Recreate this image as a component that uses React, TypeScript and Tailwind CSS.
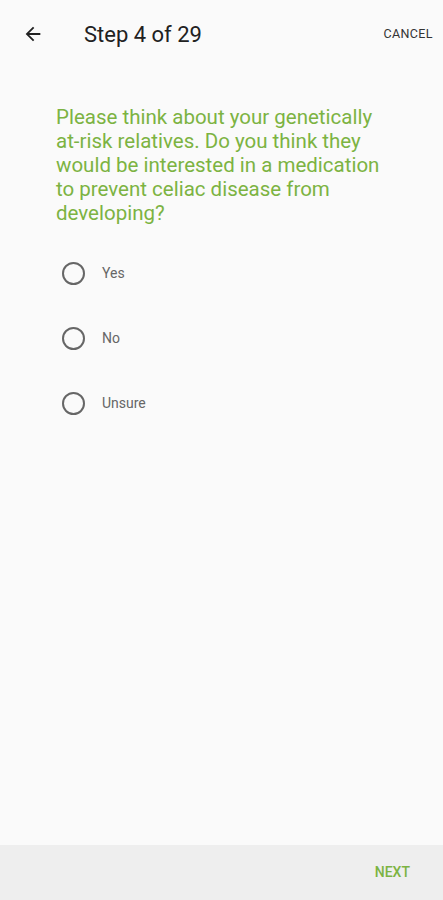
import { useState } from "react";

const options = ["Yes", "No", "Unsure"];

const App = () => {
  const [selected, setSelected] = useState<string | null>(null);

  return (
    <div
      className="w-[443px] h-[900px] bg-[#fafafa] flex flex-col"
      style={{ fontFamily: "Roboto, 'Noto Sans', sans-serif" }}
    >
      {/* Toolbar */}
      <div className="h-[68px] flex items-center pl-[22px] pr-[10px]">
        <svg width="22" height="22" viewBox="0 0 24 24" className="text-[#212121]">
          <path
            d="M20 11H7.83l5.59-5.59L12 4l-8 8 8 8 1.41-1.41L7.83 13H20v-2z"
            fill="currentColor"
          />
        </svg>
        <div className="ml-[40px] text-[22px] text-[#212121] flex-1">Step 4 of 29</div>
        <div className="text-[12.5px] text-[#333] tracking-[0.4px]">CANCEL</div>
      </div>

      {/* Question */}
      <p className="pl-[56px] pr-[50px] pt-[37px] text-[20.5px] leading-[24px] text-[#7cb342]">
        Please think about your genetically{" "}
        <span className="inline-block whitespace-nowrap">at-risk</span> relatives. Do you think
        they would be interested in a medication to prevent celiac disease from developing?
      </p>

      <div className="flex flex-col pt-[16px] pl-[62px]">
        {options.map((opt) => (
          <button
            key={opt}
            onClick={() => setSelected(opt)}
            className="h-[65px] flex items-center gap-[17px] text-left"
          >
            <span className="w-[23px] h-[23px] rounded-full border-2 border-[#666] flex items-center justify-center">
              {selected === opt && <span className="w-[11px] h-[11px] rounded-full bg-[#7cb342]" />}
            </span>
            <span className="text-[14px] text-[#666]">{opt}</span>
          </button>
        ))}
      </div>

      <div className="flex-1" />

      {/* Bottom bar */}
      <div className="h-[55px] bg-[#eeeeee] flex items-center justify-end pr-[33px]">
        <span className="text-[14px] font-medium text-[#7cb342]">NEXT</span>
      </div>
    </div>
  );
};

export default App;
